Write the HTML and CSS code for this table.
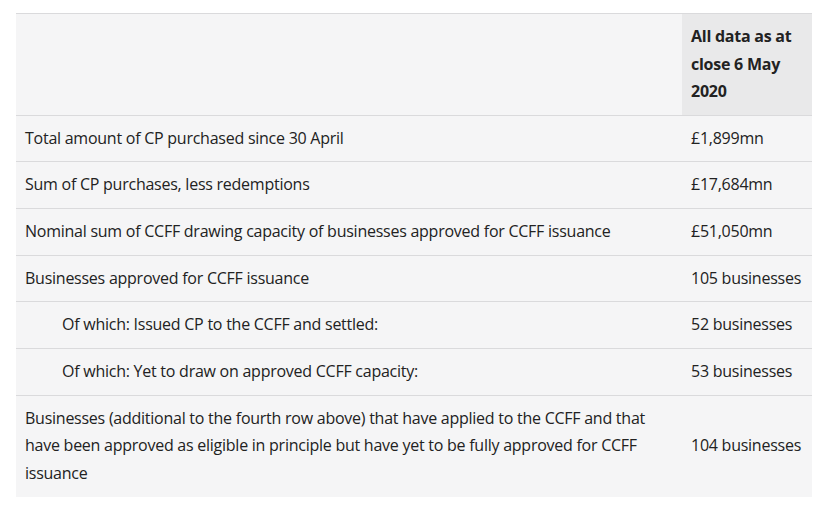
FILE: index.html
```html
<!DOCTYPE html>
<html lang="en">
	<head>
		<meta http-equiv="Content-Type" content="text/html; charset=utf-8" />
		<title>CCFF usage</title>
		<link rel="stylesheet" href="styles.css">
	</head>

	<body>
		<div class="wrap">
			<table class="data">
				<thead>
					<tr>
						<th class="blank"></th>
						<th class="date">All data as at close 6 May 2020</th>
					</tr>
				</thead>
				<tbody>
					<tr>
						<td>Total amount of CP purchased since 30 April</td>
						<td class="val">£1,899mn</td>
					</tr>
					<tr>
						<td>Sum of CP purchases, less redemptions</td>
						<td class="val">£17,684mn</td>
					</tr>
					<tr>
						<td>Nominal sum of CCFF drawing capacity of businesses approved for CCFF issuance</td>
						<td class="val">£51,050mn</td>
					</tr>
					<tr>
						<td>Businesses approved for CCFF issuance</td>
						<td class="val">105 businesses</td>
					</tr>
					<tr>
						<td class="sub">Of which: Issued CP to the CCFF and settled:</td>
						<td class="val">52 businesses</td>
					</tr>
					<tr>
						<td class="sub">Of which: Yet to draw on approved CCFF capacity:</td>
						<td class="val">53 businesses</td>
					</tr>
					<tr>
						<td>Businesses (additional to the fourth row above) that have applied to the CCFF and that have been approved as eligible in principle but have yet to be fully approved for CCFF issuance</td>
						<td class="val">104 businesses</td>
					</tr>
				</tbody>
			</table>
		</div>
	</body>
</html>
```
FILE: styles.css
```css
body {
	background: #fff;
	color: #222;
	font-family: "Open Sans", "Noto Sans", sans-serif;
	font-size: 16px;
	letter-spacing: -0.25px;
	margin: 0;
}
.wrap {
	padding: 13px 13px 0 16px;
}
.data {
	background-color: #f5f5f6;
	border-collapse: collapse;
	border-top: 1px solid #dadadc;
	line-height: 27.7px;
	width: 796px;
}
.data th,
.data td {
	padding: 9px;
	text-align: left;
	vertical-align: middle;
}
.data th:first-child,
.data td:first-child {
	padding-right: 20px;
}
.data th {
	font-weight: 700;
	line-height: 27.5px;
	vertical-align: top;
}
.data tr {
	border-bottom: 1px solid #dadadc;
}
.data tbody tr:last-child {
	border-bottom: 0;
}
.date {
	background-color: #e9e9ea;
	width: 112px;
}
.data td.sub {
	padding-left: 46px;
}
.val {
	white-space: nowrap;
}
```
